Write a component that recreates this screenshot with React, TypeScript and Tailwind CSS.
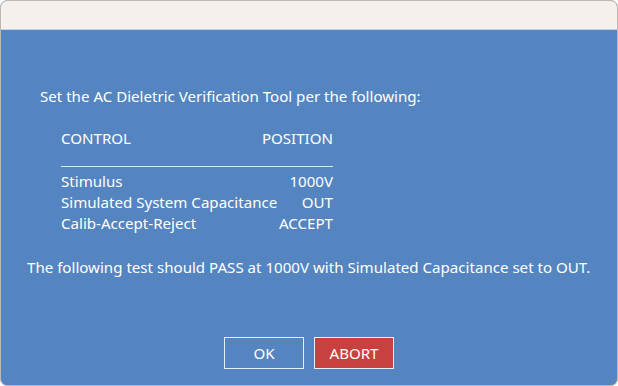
export default function App() {
  const rows = [
    ["Stimulus", "1000V"],
    ["Simulated System Capacitance", "OUT"],
    ["Calib-Accept-Reject", "ACCEPT"],
  ];

  return (
    <div className="flex h-[386px] w-[618px] flex-col overflow-hidden rounded-[7px] border border-[#bdb8b2] bg-[#5485c0] font-['Noto_Sans','Open_Sans',sans-serif] text-white">
      <div className="h-[29px] shrink-0 border-b border-[#b9d3f2] bg-[#f6f0ec]" />

      <div className="flex flex-1 flex-col pl-[26px] text-[15.1px] leading-[21px]">
        <p className="ml-[13px] mt-[56px] whitespace-nowrap">
          Set the AC Dieletric Verification Tool per the following:
        </p>

        <div className="ml-[34px] mt-[21px] w-[272px]">
          <div className="flex justify-between">
            <span>CONTROL</span>
            <span>POSITION</span>
          </div>
          <div className="mt-[17px] h-px bg-[#dbe7f5]" />
          <div className="mt-[4px]">
            {rows.map(([name, pos]) => (
              <div key={name} className="flex justify-between whitespace-nowrap">
                <span>{name}</span>
                <span>{pos}</span>
              </div>
            ))}
          </div>
        </div>

        <p className="mt-[23px] whitespace-nowrap">
          The following test should PASS at 1000V with Simulated Capacitance set to OUT.
        </p>

        <div className="mt-auto mb-[16px] flex justify-center gap-[10px] pr-[26px]">
          <button className="h-[32px] w-[80px] border border-[#e6eef8] bg-[#5485c0] text-[15.1px]">
            OK
          </button>
          <button className="h-[32px] w-[80px] border border-[#e6eef8] bg-[#c8403f] text-[15.1px]">
            ABORT
          </button>
        </div>
      </div>
    </div>
  );
}
